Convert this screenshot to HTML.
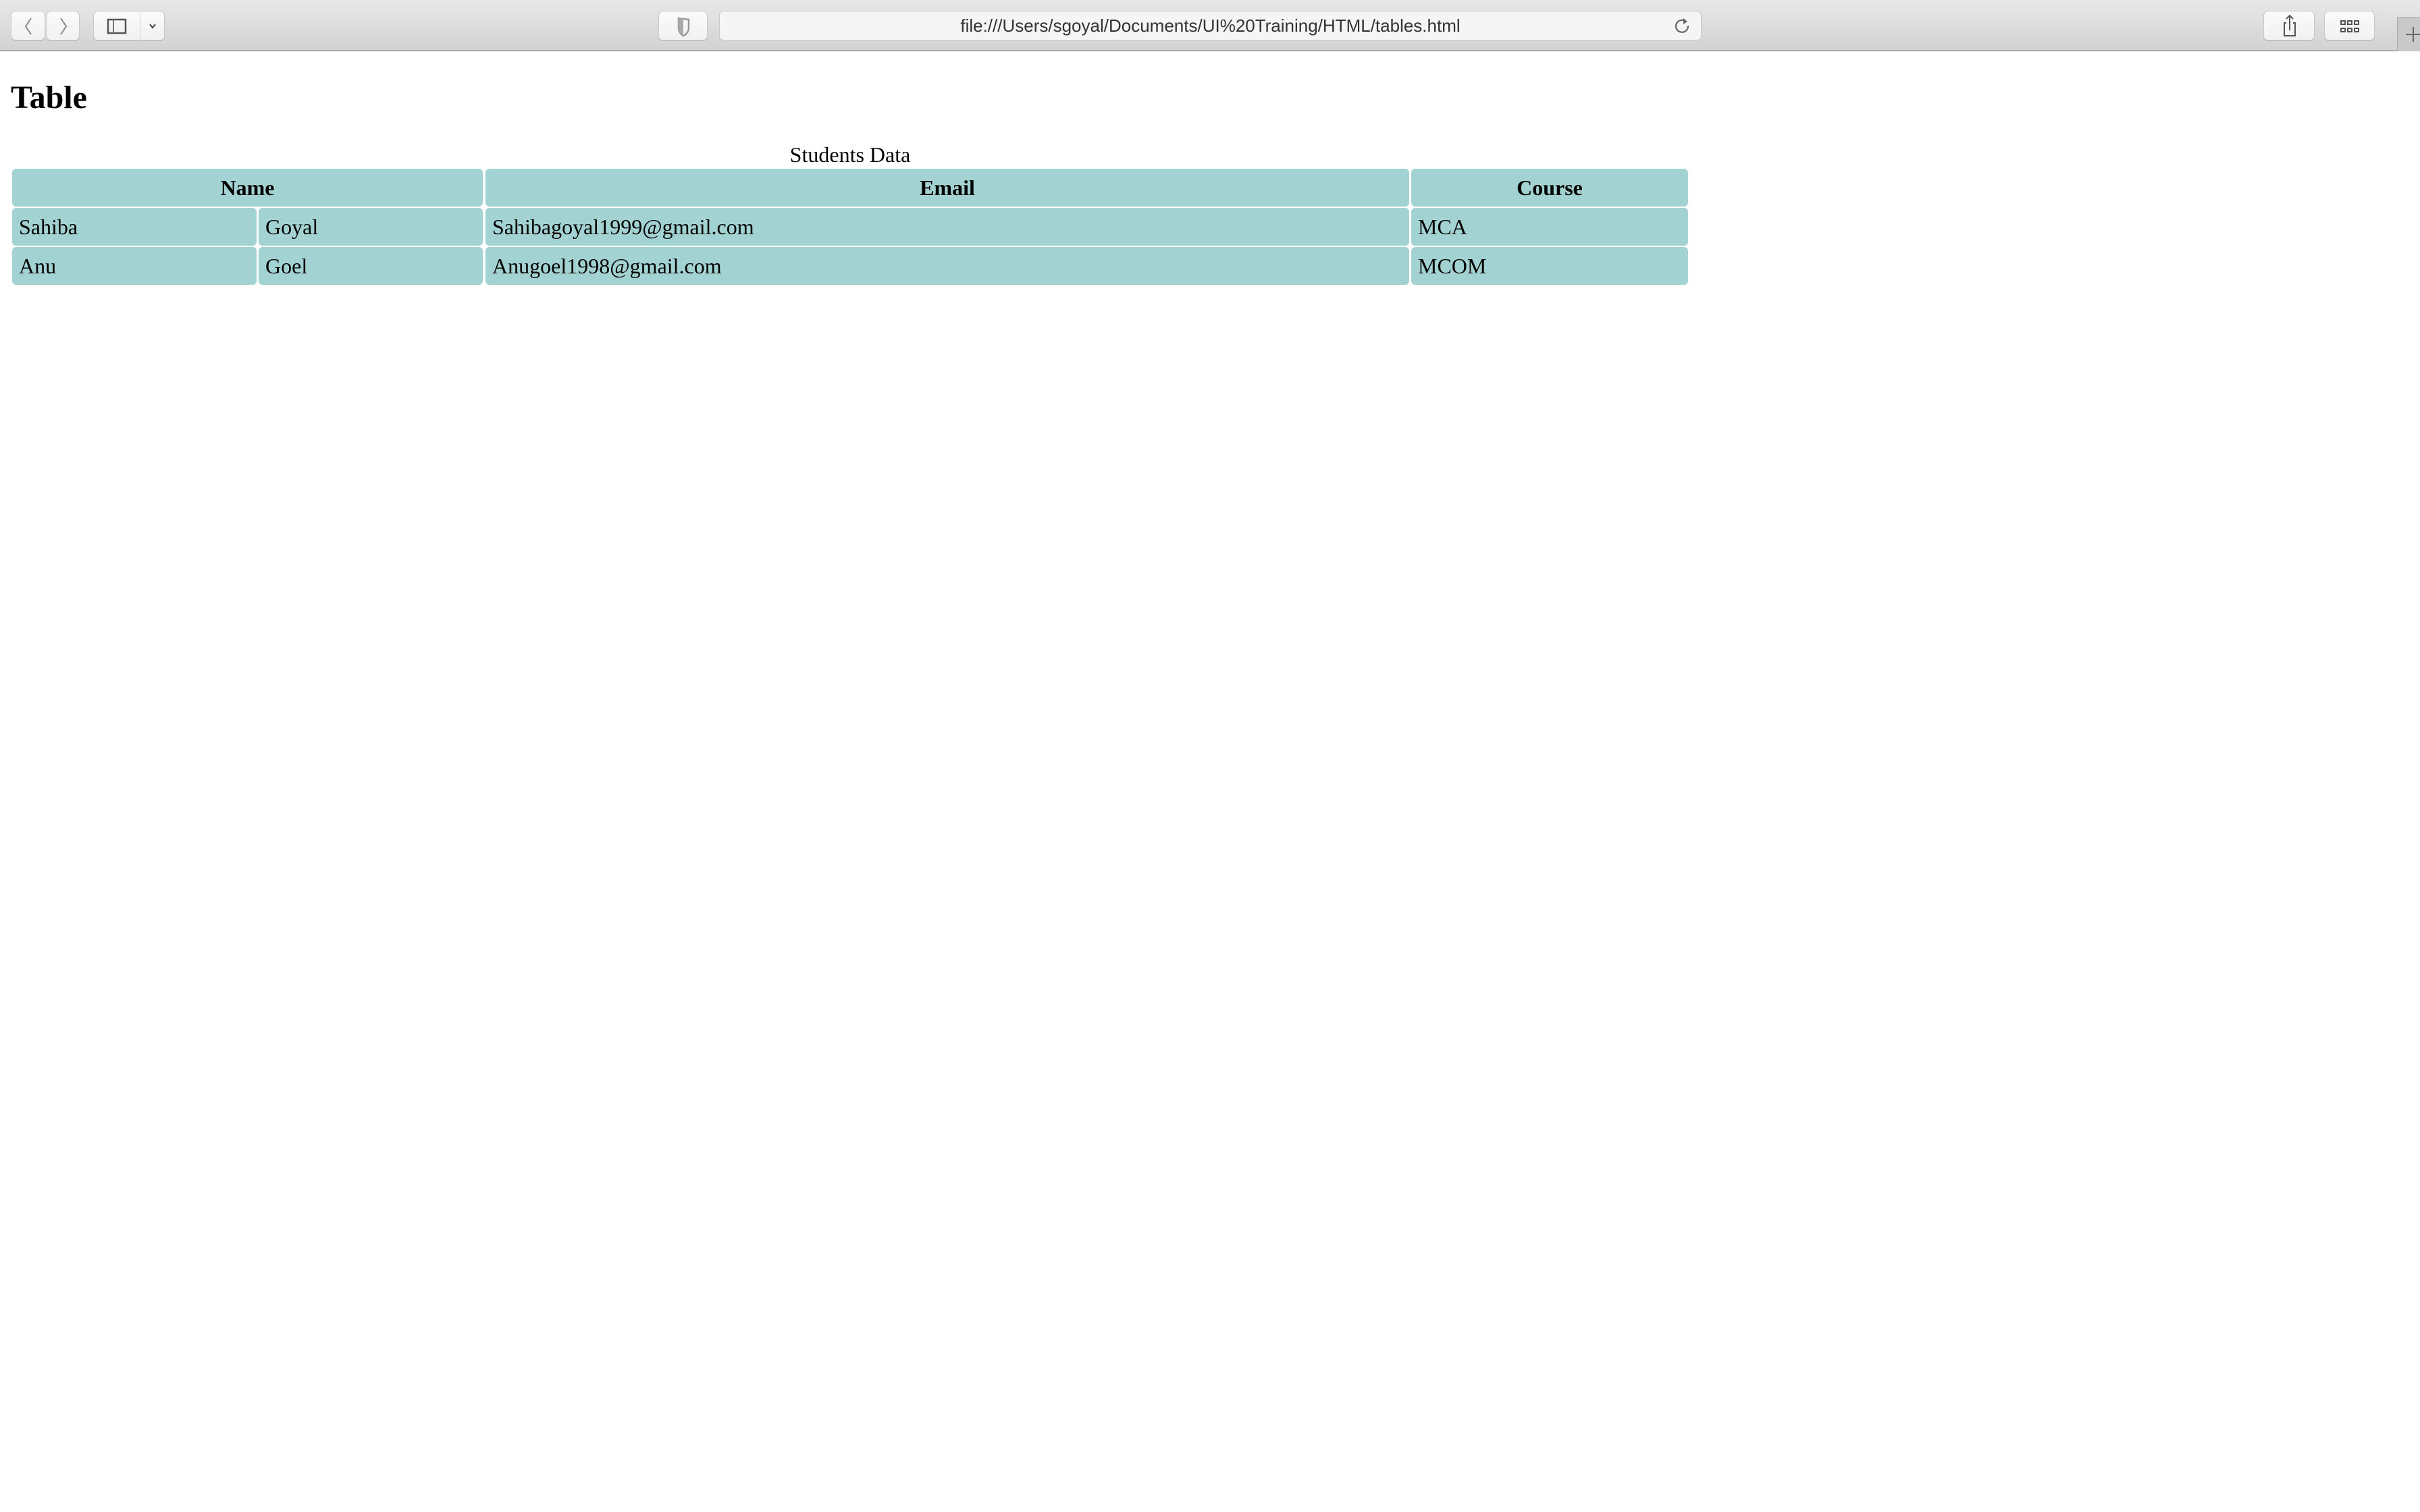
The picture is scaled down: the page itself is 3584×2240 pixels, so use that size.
<!DOCTYPE html>
<html><head><meta charset="utf-8"><style>
*{margin:0;padding:0;box-sizing:border-box}
html,body{width:3584px;height:2240px;background:#fff;overflow:hidden;position:relative}
.tb{position:absolute;left:0;top:0;width:3584px;height:76px;background:linear-gradient(#e8e8e8,#d2d2d2);border-bottom:2px solid #a9a9a9}
.btn{position:absolute;top:16px;height:44px;background:linear-gradient(#fbfbfb,#f1f1f1);border:1px solid #c8c8c8;border-radius:7px;box-shadow:0 1px 0 #bbb}
.url{position:absolute;left:1065px;top:16px;width:1455px;height:44px;background:#f5f5f5;border:1px solid #c8c8c8;border-radius:7px;font:26px "Liberation Sans",sans-serif;color:#333;text-align:center;line-height:42px}
.c{position:absolute;background:#a3d2d3;border-radius:6px;font:32px "Liberation Serif",serif;color:#000;line-height:56px;padding-left:10px;height:56px}
.h{font-weight:bold;text-align:center;padding-left:0}
</style></head><body>
<div class="tb">
<div class="btn" style="left:16px;width:51px"><svg width="51" height="44"><path d="M29 10 L21 22 L29 34" stroke="#8a8a8a" stroke-width="2" fill="none"/></svg></div>
<div class="btn" style="left:68px;width:50px"><svg width="50" height="44"><path d="M21 10 L29 22 L21 34" stroke="#8a8a8a" stroke-width="2" fill="none"/></svg></div>
<div class="btn" style="left:138px;width:106px"><svg width="106" height="44"><rect x="21" y="12" width="26" height="20" stroke="#555" stroke-width="2.5" fill="none"/><line x1="29" y1="12" x2="29" y2="32" stroke="#777" stroke-width="2"/><line x1="69" y1="0" x2="69" y2="44" stroke="#ddd"/><path d="M83 19 L87 24 L91 19" stroke="#444" stroke-width="2" fill="none"/></svg></div>
<div class="btn" style="left:975px;width:73px"><svg width="73" height="44"><path d="M29 10 L44 12 L44 24 Q44 32 36 36 Q29 32 29 24 Z" stroke="#999" stroke-width="2.5" fill="none"/><path d="M29 10 L36 11 L36 36 Q29 32 29 24 Z" fill="#aaa"/></svg></div>
<div class="url">file:///Users/sgoyal/Documents/UI%20Training/HTML/tables.html<svg style="position:absolute;right:12px;top:8px" width="28" height="28"><path d="M18 7 A9 9 0 1 0 21 13" stroke="#666" stroke-width="2.2" fill="none"/><path d="M14 2 L20 7 L14 11 Z" fill="#666"/></svg></div>
<div class="btn" style="left:3352px;width:76px"><svg width="76" height="44"><path d="M33 17 H30 V36 H46 V17 H43" stroke="#555" stroke-width="2" fill="none"/><path d="M38 6 V28 M33 11 L38 6 L43 11" stroke="#555" stroke-width="2" fill="none"/></svg></div>
<div class="btn" style="left:3442px;width:75px"><svg width="75" height="44"><g fill="none" stroke="#555" stroke-width="2"><rect x="24" y="14" width="6" height="5"/><rect x="34" y="14" width="6" height="5"/><rect x="44" y="14" width="6" height="5"/><rect x="24" y="25" width="6" height="5"/><rect x="34" y="25" width="6" height="5"/><rect x="44" y="25" width="6" height="5"/></g></svg></div>
<div style="position:absolute;left:3550px;top:25px;width:34px;height:51px;background:#c9c9c9;border-left:1px solid #aaa;border-top:1px solid #b5b5b5"><svg width="34" height="50"><path d="M23 14 V36 M12 25 H34" stroke="#666" stroke-width="2"/></svg></div>
</div>
<div style="position:absolute;left:16px;top:110px;font:bold 48px 'Liberation Serif',serif;line-height:70px">Table</div>
<div style="position:absolute;left:18px;width:2482px;top:210px;font:32px 'Liberation Serif',serif;text-align:center;line-height:38px">Students Data</div>
<div class="c h" style="left:18px;top:250px;width:697px">Name</div>
<div class="c h" style="left:719px;top:250px;width:1368px">Email</div>
<div class="c h" style="left:2090px;top:250px;width:410px">Course</div>
<div class="c" style="left:18px;top:308px;width:362px">Sahiba</div>
<div class="c" style="left:383px;top:308px;width:332px">Goyal</div>
<div class="c" style="left:719px;top:308px;width:1368px">Sahibagoyal1999@gmail.com</div>
<div class="c" style="left:2090px;top:308px;width:410px">MCA</div>
<div class="c" style="left:18px;top:366px;width:362px">Anu</div>
<div class="c" style="left:383px;top:366px;width:332px">Goel</div>
<div class="c" style="left:719px;top:366px;width:1368px">Anugoel1998@gmail.com</div>
<div class="c" style="left:2090px;top:366px;width:410px">MCOM</div>
</body></html>
